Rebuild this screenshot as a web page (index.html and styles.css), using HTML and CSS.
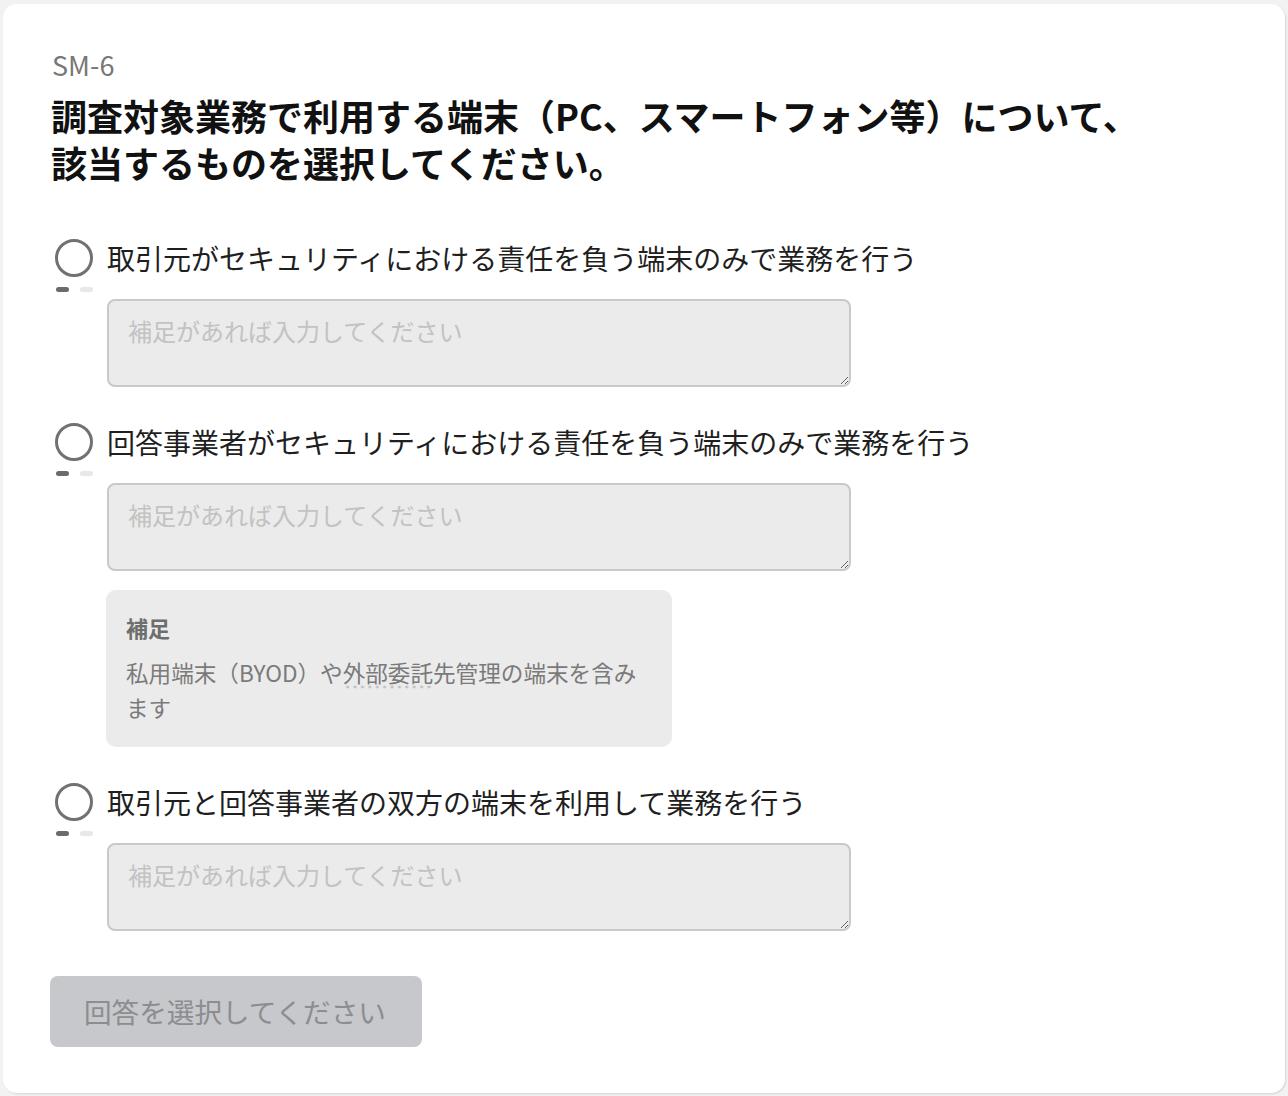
FILE: index.html
```html
<!DOCTYPE html>
<html lang="ja">
<head>
<meta charset="utf-8">
<title>SM-6</title>
<link rel="stylesheet" href="styles.css">
</head>
<body>
<main class="card">
  <div class="code">SM-6</div>
  <h1 class="title">調査対象業務で利用する端末（PC、スマートフォン等）について、<br>該当するものを選択してください。</h1>

  <div class="option">
    <label class="opt-row"><span class="radio"></span><span class="opt-label">取引元がセキュリティにおける責任を負う端末のみで業務を行う</span></label>
    <div class="pills"><span class="pill pill-dark"></span><span class="pill pill-light"></span></div>
    <textarea class="note-input" placeholder="補足があれば入力してください"></textarea>
  </div>

  <div class="option">
    <label class="opt-row"><span class="radio"></span><span class="opt-label">回答事業者がセキュリティにおける責任を負う端末のみで業務を行う</span></label>
    <div class="pills"><span class="pill pill-dark"></span><span class="pill pill-light"></span></div>
    <textarea class="note-input" placeholder="補足があれば入力してください"></textarea>
    <div class="hint">
      <div class="hint-title">補足</div>
      <p class="hint-body">私用端末（BYOD）や<span class="term">外部委託</span>先管理の端末を含みます</p>
    </div>
  </div>

  <div class="option">
    <label class="opt-row"><span class="radio"></span><span class="opt-label">取引元と回答事業者の双方の端末を利用して業務を行う</span></label>
    <div class="pills"><span class="pill pill-dark"></span><span class="pill pill-light"></span></div>
    <textarea class="note-input" placeholder="補足があれば入力してください"></textarea>
  </div>

  <button class="submit" type="button" disabled>回答を選択してください</button>
</main>
</body>
</html>
```

FILE: styles.css
```css
* { box-sizing: border-box; }

html, body {
  margin: 0;
  background: #f2f2f2;
}

body {
  padding: 4px 3px 4px 3px;
  font-family: "Noto Sans CJK JP", "Noto Sans", sans-serif;
  color: #1a1a1a;
}

.card {
  background: #ffffff;
  border-radius: 14px;
  box-shadow: 1px 1px 2px rgba(0, 0, 0, 0.12);
  padding: 45px 48px 46px 47px;
  display: flex;
  flex-direction: column;
  align-items: flex-start;
}

.code {
  font-size: 27px;
  line-height: 32px;
  color: #777777;
  padding-left: 2px;
}

.title {
  margin: 11px 0 0 0;
  font-size: 36px;
  line-height: 47px;
  font-weight: 700;
  color: #111111;
  padding-left: 1px;
}

.option {
  display: flex;
  flex-direction: column;
  align-items: flex-start;
  margin-top: 35px;
}

.title + .option { margin-top: 52px; }

.opt-row {
  display: flex;
  align-items: center;
  gap: 14px;
  height: 40px;
}

.radio {
  width: 38px;
  height: 38px;
  margin-left: 5px;
  border: 3px solid #717171;
  border-radius: 50%;
  background: #ffffff;
  flex: none;
}

.opt-label {
  font-size: 28px;
  line-height: 40px;
  color: #1f1f1f;
}

.pills {
  display: flex;
  gap: 11px;
  margin: 9px 0 0 6px;
}

.pill {
  width: 13px;
  height: 5px;
  border-radius: 3px;
}

.pill-dark { background: #6b6b6b; }
.pill-light { background: #e8e8e8; }

.note-input {
  margin: 7px 0 0 57px;
  width: 744px;
  height: 88px;
  padding: 12px 19px;
  border: 2px solid #c9c9c9;
  border-radius: 8px;
  background: #ebebeb;
  font-family: "Noto Sans CJK JP", "Noto Sans", sans-serif;
  font-size: 24px;
  line-height: 36px;
  color: #333333;
}

.note-input::placeholder { color: #c2c2c2; }

.hint {
  margin: 19px 0 0 56px;
  width: 566px;
  padding: 21px 26px 22px 20px;
  background: #ebebeb;
  border-radius: 10px;
  color: #777777;
}

.hint-title {
  font-size: 22px;
  line-height: 32px;
  font-weight: 700;
  color: #6e6e6e;
}

.hint-body {
  margin: 12px 0 0 0;
  font-size: 22.6px;
  line-height: 35px;
  color: #7a7a7a;
}

.term {
  background-image: radial-gradient(circle, #c2c2c2 1.3px, transparent 1.7px);
  background-size: 7.4px 4px;
  background-repeat: repeat-x;
  background-position: 1px 100%;
}

.submit {
  margin-top: 45px;
  padding: 15px 36px 15px 34px;
  border: none;
  border-radius: 8px;
  background: #c6c8cb;
  color: #8b8d90;
  font-family: "Noto Sans CJK JP", "Noto Sans", sans-serif;
  font-size: 27.6px;
  line-height: 41px;
}
```
